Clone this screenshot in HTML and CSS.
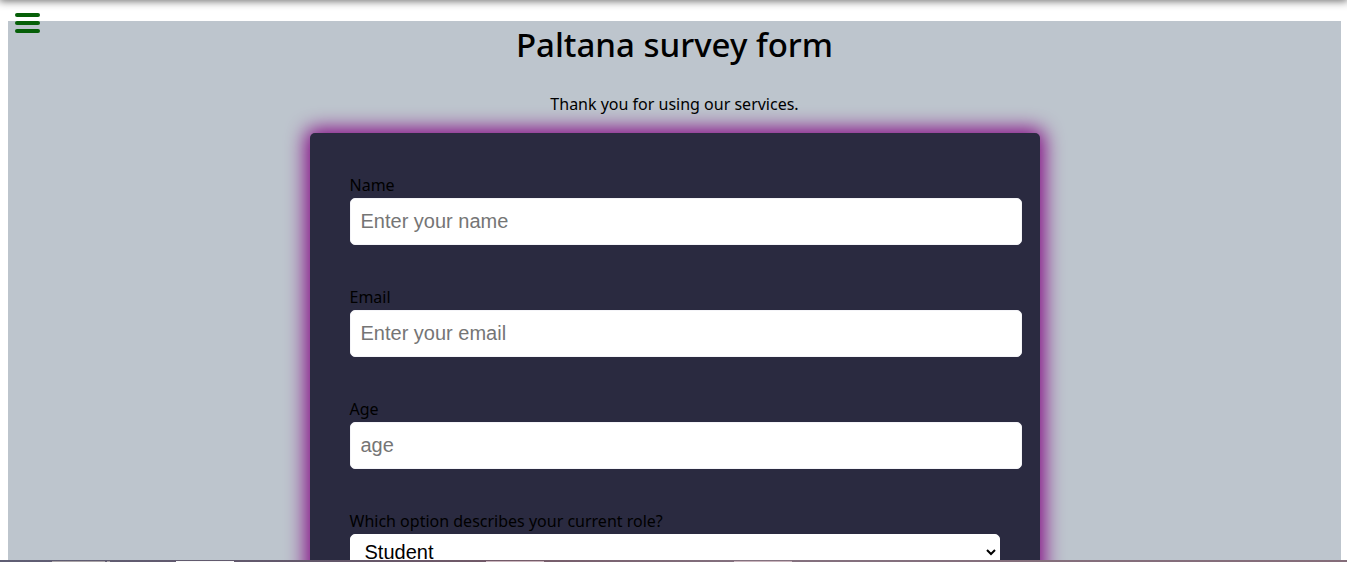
FILE: index.html
```html
<!DOCTYPE html>
<html lang="en">
<head>
<meta charset="utf-8">
<title>Paltana survey form</title>
<link rel="stylesheet" href="styles.css">
</head>
<body>
<div class="topbar"></div>
<button class="menu" type="button" aria-label="Menu">
  <span class="menu-line"></span>
  <span class="menu-line"></span>
  <span class="menu-line"></span>
</button>
<main class="page">
  <h1 class="title">Paltana survey form</h1>
  <p class="description">Thank you for using our services.</p>
  <form class="survey">
    <div class="field">
      <label class="label" for="name">Name</label>
      <input class="control" id="name" type="text" placeholder="Enter your name">
    </div>
    <div class="field">
      <label class="label" for="email">Email</label>
      <input class="control" id="email" type="email" placeholder="Enter your email">
    </div>
    <div class="field">
      <label class="label" for="age">Age</label>
      <input class="control" id="age" type="number" placeholder="age">
    </div>
    <div class="field">
      <label class="label" for="role">Which option describes your current role?</label>
      <select class="dropdown" id="role">
        <option>Student</option>
      </select>
    </div>
  </form>
</main>
<div class="strip">
  <svg class="strip-art" width="1347" height="2" viewBox="0 0 1347 2" preserveAspectRatio="none" shape-rendering="crispEdges" aria-hidden="true">
    <path fill="#a9a3a6" d="M52 1h53v1H52zM107 1h3v1h-3z"/>
    <path fill="#f8f8f8" d="M176 1h58v1h-58z"/>
    <path fill="#c9b4bc" d="M486 1h58v1h-58zM734 1h58v1h-58z"/>
  </svg>
</div>
</body>
</html>
```
FILE: styles.css
```css
html {
  background: #fff;
}

body {
  margin: 0;
  height: 100vh;
  overflow: hidden;
  color: #000;
  font-family: "Noto Sans", sans-serif;
  font-size: 16px;
  line-height: 24px;
}

.topbar {
  position: fixed;
  top: -8px;
  left: 0;
  right: 0;
  height: 8px;
  box-shadow: 0 0 8px 1px #666;
}

.menu {
  position: fixed;
  top: 12px;
  left: 15px;
  width: 25px;
  display: flex;
  flex-direction: column;
  gap: 4px;
  padding: 1px 0;
  border: 0;
  background: none;
}

.menu-line {
  height: 4px;
  border-radius: 2px;
  background: #065f08;
}

.page {
  margin: 21px 6px 0 8px;
  background: #bdc5cd;
}

.title {
  margin: 0;
  font-size: 33px;
  font-weight: 500;
  line-height: 48px;
  text-align: center;
}

.description {
  margin: 0;
  padding: 23px 0 17px;
  line-height: 24px;
  font-size: 16px;
  text-align: center;
}

.survey {
  box-sizing: border-box;
  max-width: 730px;
  margin: 0 auto;
  padding: 40px;
  border-radius: 5px;
  background: #2a2a40;
  box-shadow: 0 0 20px 4px purple;
}

.field {
  display: flex;
  flex-direction: column;
  margin-bottom: 40px;
}

.label {
  line-height: 25px;
}

.control {
  width: 100%;
  padding: 10px;
  border: 1px solid #f4f4f8;
  border-radius: 5px;
  background: #fff;
  font-family: "Liberation Sans", Arial, sans-serif;
  font-size: 20px;
  line-height: 25px;
  height: 25px;
}

.control::placeholder {
  color: #757575;
}

.dropdown {
  width: 100%;
  height: 36px;
  padding: 0 10px;
  border: 1px solid #fff;
  border-radius: 5px;
  background: #fff;
  color: #000;
  font-family: "Liberation Sans", Arial, sans-serif;
  font-size: 20px;
}

.strip {
  position: fixed;
  left: 0;
  right: 0;
  bottom: 0;
  height: 2px;
  background: linear-gradient(90deg, #5f5e74, #63576a 25%, #745a68 38%, #84717f 55%, #846c79);
}

.strip-art {
  display: block;
  width: 100%;
}
```
